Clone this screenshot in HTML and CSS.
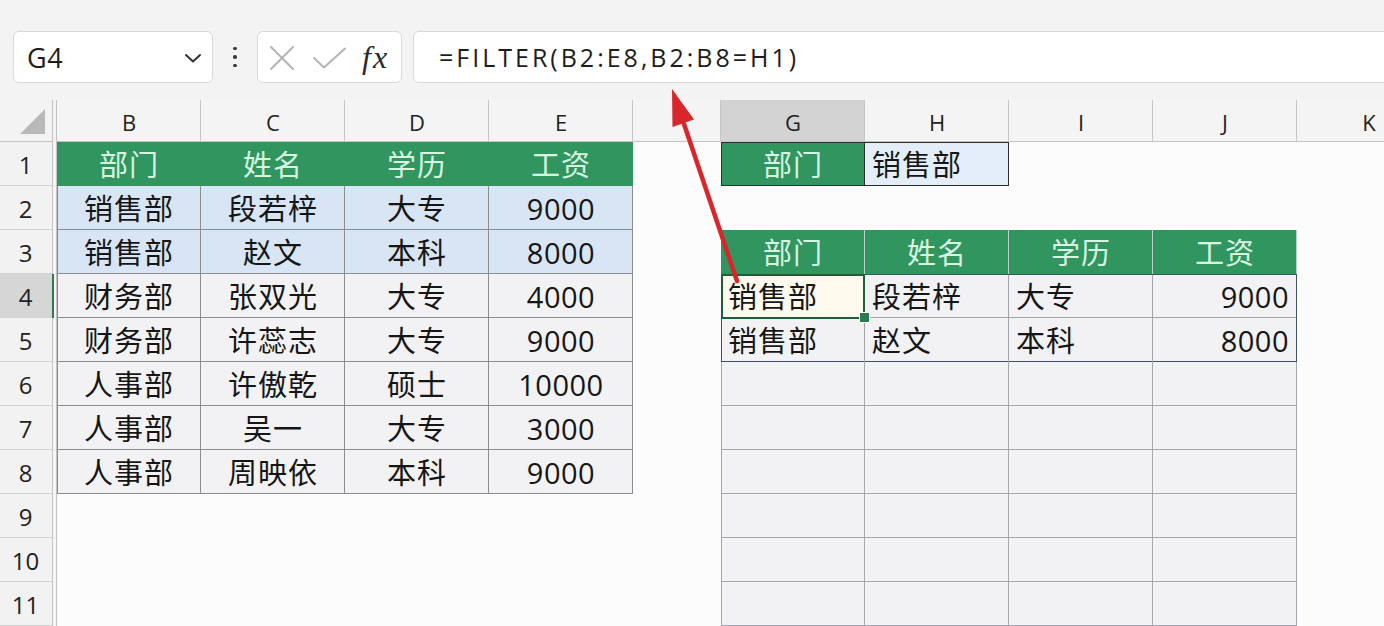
FILE: index.html
```html
<!DOCTYPE html>
<html lang="zh-CN">
<head>
<meta charset="utf-8">
<title>FILTER</title>
<link rel="stylesheet" href="styles.css">
</head>
<body>
<div class="app">
  <div class="toolbar">
    <div class="namebox">
      <span class="nb-text">G4</span>
      <svg class="chev" width="18" height="10" viewBox="0 0 18 10"><path d="M2 2 L9 8.5 L16 2" fill="none" stroke="#333" stroke-width="2" stroke-linecap="round" stroke-linejoin="round"/></svg>
    </div>
    <div class="dots"><i></i><i></i><i></i></div>
    <div class="fxbox">
      <svg class="fxicons" width="96" height="50" viewBox="0 0 96 50">
        <path d="M13 15 L35 37 M35 15 L13 37" stroke="#b4b4b4" stroke-width="2" stroke-linecap="round"/>
        <path d="M56 26 L66 35.5 L87 16.5" fill="none" stroke="#b4b4b4" stroke-width="2" stroke-linecap="round" stroke-linejoin="round"/>
      </svg>
      <span class="fx">fx</span>
    </div>
    <div class="formula">=FILTER(B2:E8,B2:B8=H1)</div>
  </div>

  <div class="sheet">
    <!-- column headers -->
    <div class="corner"><span class="tri"></span></div>
    <div class="ch">B</div><div class="ch">C</div><div class="ch">D</div><div class="ch">E</div><div class="ch"></div>
    <div class="ch on">G</div><div class="ch">H</div><div class="ch">I</div><div class="ch">J</div><div class="ch">K</div>

    <!-- row 1 -->
    <div class="rh">1</div>
    <div class="c gh">部门</div><div class="c gh">姓名</div><div class="c gh">学历</div><div class="c gh">工资</div>
    <div class="c"></div>
    <div class="c gh bx g1">部门</div><div class="c blt bx h1 left">销售部</div>
    <div class="c"></div><div class="c"></div><div class="c"></div>

    <!-- row 2 -->
    <div class="rh">2</div>
    <div class="c bl bx lt fst">销售部</div><div class="c bl bx lt">段若梓</div><div class="c bl bx lt">大专</div><div class="c bl bx lt num">9000</div>
    <div class="c"></div>
    <div class="c"></div><div class="c"></div><div class="c"></div><div class="c"></div><div class="c"></div>

    <!-- row 3 -->
    <div class="rh">3</div>
    <div class="c bl bx lt fst">销售部</div><div class="c bl bx lt">赵文</div><div class="c bl bx lt">本科</div><div class="c bl bx lt num">8000</div>
    <div class="c"></div>
    <div class="c gh bx h3">部门</div><div class="c gh bx h3">姓名</div><div class="c gh bx h3">学历</div><div class="c gh bx h3">工资</div>
    <div class="c"></div>

    <!-- row 4 -->
    <div class="rh on">4</div>
    <div class="c gy bx lt fst">财务部</div><div class="c gy bx lt">张双光</div><div class="c gy bx lt">大专</div><div class="c gy bx lt num">4000</div>
    <div class="c"></div>
    <div class="c yl bx r top gl left sel">销售部</div><div class="c gy bx r top left">段若梓</div><div class="c gy bx r top left">大专</div><div class="c gy bx r top jr right num">9000</div>
    <div class="c"></div>

    <!-- row 5 -->
    <div class="rh">5</div>
    <div class="c gy bx lt fst">财务部</div><div class="c gy bx lt">许蕊志</div><div class="c gy bx lt">大专</div><div class="c gy bx lt num">9000</div>
    <div class="c"></div>
    <div class="c gy bx r bot gl left">销售部</div><div class="c gy bx r bot left">赵文</div><div class="c gy bx r bot left">本科</div><div class="c gy bx r bot jr right num">8000</div>
    <div class="c"></div>

    <!-- row 6 -->
    <div class="rh">6</div>
    <div class="c gy bx lt fst">人事部</div><div class="c gy bx lt">许傲乾</div><div class="c gy bx lt">硕士</div><div class="c gy bx lt num">10000</div>
    <div class="c"></div>
    <div class="c gy bx e fst2"></div><div class="c gy bx e"></div><div class="c gy bx e"></div><div class="c gy bx e"></div>
    <div class="c"></div>

    <!-- row 7 -->
    <div class="rh">7</div>
    <div class="c gy bx lt fst">人事部</div><div class="c gy bx lt">吴一</div><div class="c gy bx lt">大专</div><div class="c gy bx lt num">3000</div>
    <div class="c"></div>
    <div class="c gy bx e fst2"></div><div class="c gy bx e"></div><div class="c gy bx e"></div><div class="c gy bx e"></div>
    <div class="c"></div>

    <!-- row 8 -->
    <div class="rh">8</div>
    <div class="c gy bx lt fst">人事部</div><div class="c gy bx lt">周映依</div><div class="c gy bx lt">本科</div><div class="c gy bx lt num">9000</div>
    <div class="c"></div>
    <div class="c gy bx e fst2"></div><div class="c gy bx e"></div><div class="c gy bx e"></div><div class="c gy bx e"></div>
    <div class="c"></div>

    <!-- row 9 -->
    <div class="rh">9</div>
    <div class="c"></div><div class="c"></div><div class="c"></div><div class="c"></div><div class="c"></div>
    <div class="c gy bx e fst2"></div><div class="c gy bx e"></div><div class="c gy bx e"></div><div class="c gy bx e"></div>
    <div class="c"></div>

    <!-- row 10 -->
    <div class="rh">10</div>
    <div class="c"></div><div class="c"></div><div class="c"></div><div class="c"></div><div class="c"></div>
    <div class="c gy bx e fst2"></div><div class="c gy bx e"></div><div class="c gy bx e"></div><div class="c gy bx e"></div>
    <div class="c"></div>

    <!-- row 11 -->
    <div class="rh">11</div>
    <div class="c"></div><div class="c"></div><div class="c"></div><div class="c"></div><div class="c"></div>
    <div class="c gy bx e fst2"></div><div class="c gy bx e"></div><div class="c gy bx e"></div><div class="c gy bx e"></div>
    <div class="c"></div>
  </div>

  <svg class="arrow" width="1384" height="626" viewBox="0 0 1384 626">
    <line x1="737" y1="281" x2="684" y2="124" stroke="#d8262b" stroke-width="4.5" stroke-linecap="round"/>
    <polygon points="672,89 694,119.5 672.5,127" fill="#d8262b"/>
  </svg>
</div>
</body>
</html>
```

FILE: styles.css
```css
* { box-sizing: border-box; margin: 0; padding: 0; }

html, body {
  width: 1384px;
  height: 626px;
  overflow: hidden;
  background: #fcfcfc;
}

body {
  font-family: "Open Sans", "Noto Sans CJK SC", sans-serif;
  color: #161616;
}

.app {
  position: relative;
  width: 1384px;
  height: 626px;
  overflow: hidden;
}

/* ---------- toolbar ---------- */
.toolbar {
  height: 100px;
  background: #f3f3f3;
  display: flex;
  align-items: flex-start;
  padding: 31px 0 0 13px;
}

.namebox {
  width: 200px;
  height: 52px;
  background: #fff;
  border: 1px solid #d9d9d9;
  border-radius: 6px;
  display: flex;
  align-items: center;
  justify-content: space-between;
  padding: 0 10px 0 13px;
  flex: none;
}

.nb-text {
  font-size: 27px;
  letter-spacing: 0.5px;
  color: #1d1d1d;
}

.chev { margin-top: 2px; }

.dots {
  width: 44px;
  height: 52px;
  display: flex;
  flex-direction: column;
  align-items: center;
  justify-content: center;
  gap: 5px;
  flex: none;
}

.dots i {
  display: block;
  width: 3.5px;
  height: 3.5px;
  border-radius: 50%;
  background: #3a3a3a;
}

.fxbox {
  width: 145px;
  height: 52px;
  background: #fff;
  border: 1px solid #d9d9d9;
  border-radius: 6px;
  margin-right: 11px;
  display: flex;
  align-items: center;
  flex: none;
}

.fxicons { flex: none; }

.fx {
  font-family: "Liberation Serif", "DejaVu Serif", serif;
  font-style: italic;
  font-size: 32px;
  letter-spacing: 2px;
  color: #2a2a2a;
  margin-left: 8px;
  margin-top: 1px;
}

.formula {
  flex: 1;
  margin-right: -20px;
  height: 52px;
  background: #fff;
  border: 1px solid #d9d9d9;
  border-radius: 6px;
  padding-left: 25px;
  display: flex;
  align-items: center;
  font-size: 25px;
  letter-spacing: 3px;
  color: #1d1d1d;
  white-space: nowrap;
}

/* ---------- sheet ---------- */
.sheet {
  display: grid;
  grid-template-columns: 57px repeat(4, 144px) 88px repeat(5, 144px);
  grid-template-rows: 42px repeat(11, 44px);
  width: 1500px;
}

.corner {
  position: relative;
  background: #f3f3f3;
  box-shadow: inset -1px 0 0 #c2c2c2, inset -4px 0 0 #f3f3f3, inset -5px 0 0 #c2c2c2, inset 0 -1px 0 #c4c4c4;
}

.tri {
  position: absolute;
  left: 20px;
  top: 9px;
  width: 0;
  height: 0;
  border-left: 25px solid transparent;
  border-bottom: 25px solid #b9b9b9;
}

.ch {
  background: #f4f4f4;
  box-shadow: inset -1px 0 0 #c6c6c6, inset 0 -1px 0 #c4c4c4;
  display: flex;
  align-items: center;
  justify-content: center;
  font-size: 22px;
  color: #222;
  padding-top: 2px;
}

.ch.on { background: #d3d3d3; }

.rh {
  background: #f2f2f2;
  box-shadow: inset -1px 0 0 #c2c2c2, inset -4px 0 0 #f6f6f6, inset -5px 0 0 #c2c2c2, inset 0 -1px 0 #d2d2d2;
  display: flex;
  align-items: center;
  justify-content: center;
  padding-right: 6px;
  font-size: 24px;
  color: #222;
}

.rh.on {
  background: #d6d6d6;
  box-shadow: inset -1px 0 0 #c2c2c2, inset -3px 0 0 #f6f6f6, inset -5px 0 0 #2f7a4f, inset 0 -1px 0 #d2d2d2;
}

.c {
  position: relative;
  display: flex;
  align-items: center;
  justify-content: center;
  font-size: 29px;
  letter-spacing: 1px;
  line-height: 1;
  white-space: nowrap;
  color: #161616;
}

.c.num { font-size: 29px; letter-spacing: 0.5px; }

.left { justify-content: flex-start; padding-left: 7px; }
.right { justify-content: flex-end; padding-right: 8px; }

/* fills */
.gh { background: #30955f; color: #d8f5e2; }
.bl { background: #d8e5f4; }
.gy { background: #f2f2f4; }
.yl { background: #fdf9ec; }
.blt { background: #e4eef9; }

/* borders */
.bx {
  box-shadow:
    inset 0 1px 0 var(--tc, transparent),
    inset -1px 0 0 var(--rc, transparent),
    inset 0 -1px 0 var(--bc, transparent),
    inset 1px 0 0 var(--lc, transparent);
}

.lt { --rc: #8c8c93; --bc: #8c8c93; }
.lt.fst { --lc: #8c8c93; }

.g1 { --tc: #2d2d2d; --rc: #2d2d2d; --bc: #2d2d2d; --lc: #2d2d2d; }
.h1 { --tc: #2d2d2d; --rc: #2d2d2d; --bc: #2d2d2d; }

.h3 { --rc: #b9d2c3; }

.r { --rc: #a2a5ac; --bc: #a2a5ac; }
.r.top { --tc: #3e5166; }
.r.bot { --bc: #3e5166; }
.r.gl { --lc: #3e5166; }
.r.jr { --rc: #3e5166; }

.e { --rc: #a5a7ae; --bc: #a5a7ae; }
.e.fst2 { --lc: #a5a7ae; }

/* active cell */
.sel { z-index: 2; }
.sel::after {
  content: "";
  position: absolute;
  inset: 0 0 -1px 0;
  border: 2px solid #1f5e3c;
  pointer-events: none;
}
.sel::before {
  content: "";
  position: absolute;
  right: -5px;
  bottom: -5px;
  width: 9px;
  height: 9px;
  background: #2a7a4f;
  border: 1px solid #fff;
  z-index: 3;
}

/* arrow overlay */
.arrow {
  position: absolute;
  left: 0;
  top: 0;
  pointer-events: none;
  z-index: 10;
}
```
